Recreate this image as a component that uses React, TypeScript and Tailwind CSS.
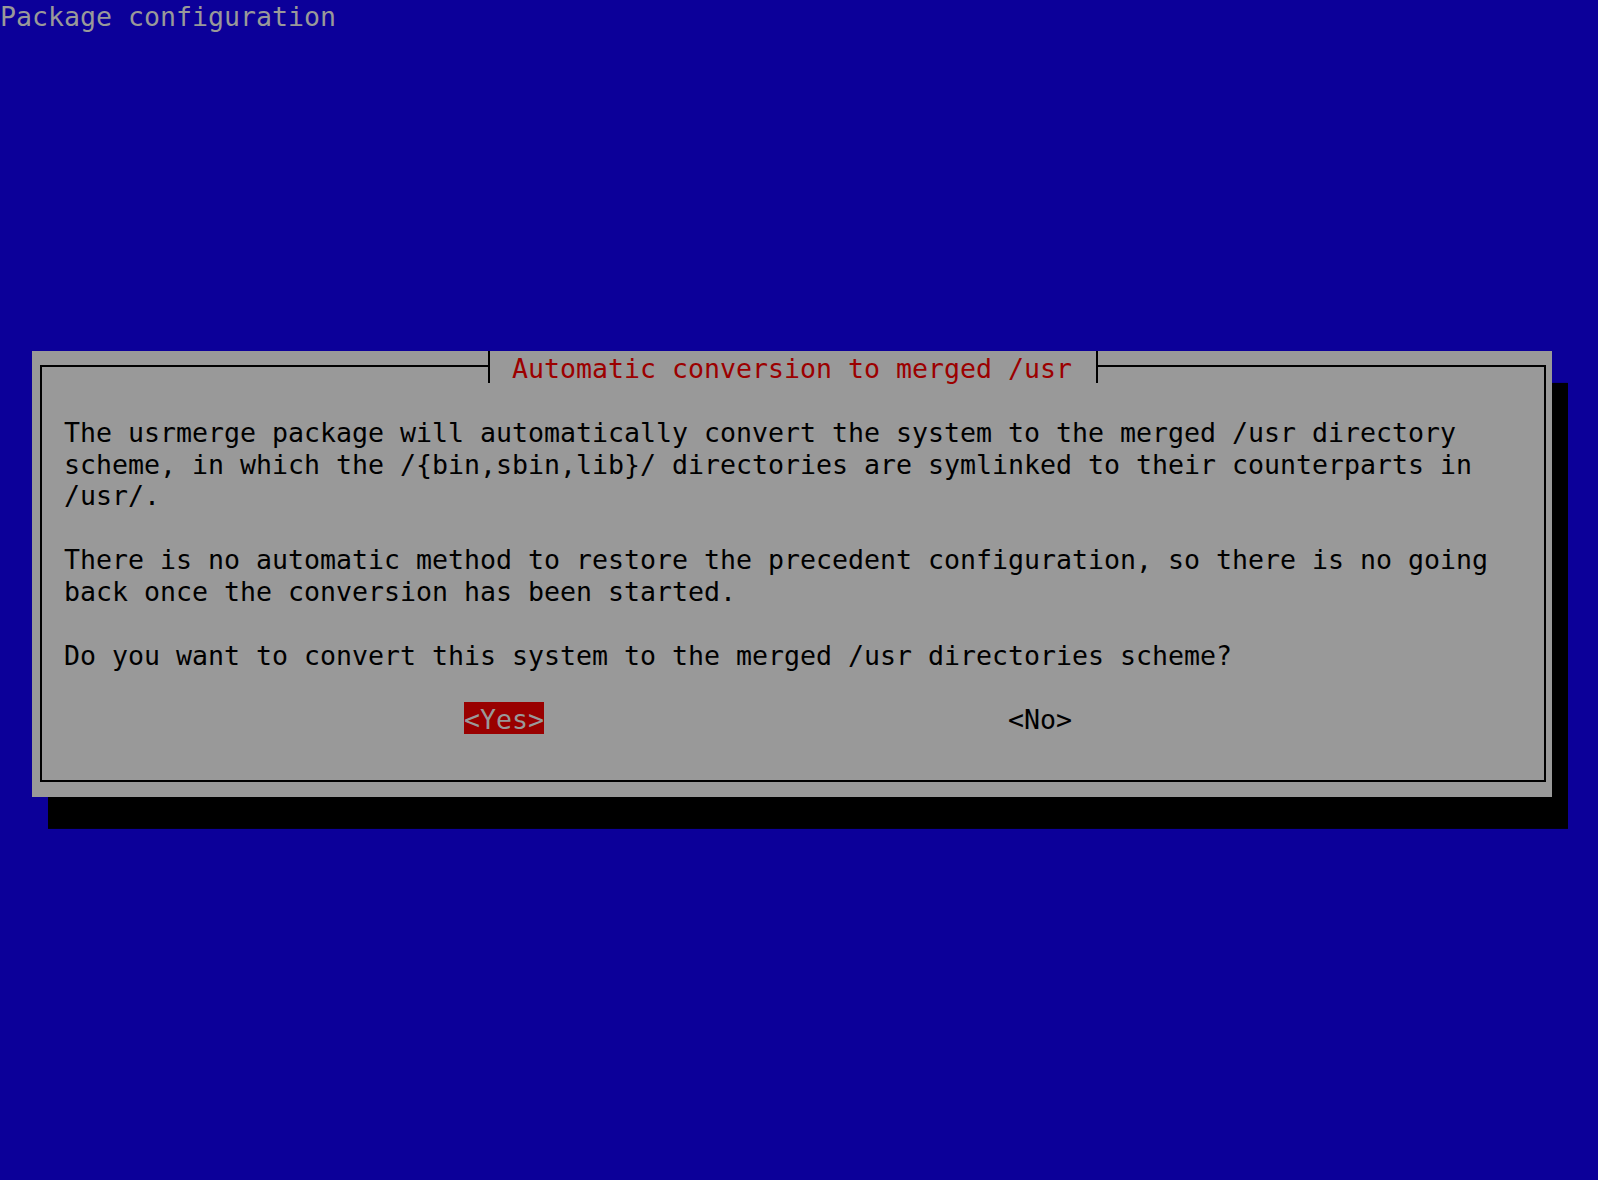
import React from "react";

// whiptail-style dialog on a 100x37 text grid (cell 16 x 31.9)
const body = [
  "The usrmerge package will automatically convert the system to the merged /usr directory",
  "scheme, in which the /{bin,sbin,lib}/ directories are symlinked to their counterparts in",
  "/usr/.",
  "",
  "There is no automatic method to restore the precedent configuration, so there is no going",
  "back once the conversion has been started.",
  "",
  "Do you want to convert this system to the merged /usr directories scheme?",
  "",
];

export default function App() {
  return (
    <div className="h-[1180px] w-full overflow-hidden bg-[#0c0099] font-['DejaVu_Sans_Mono',monospace] text-[26.58px] leading-[31.9px]">
      <div className="h-[31.9px] whitespace-pre pt-[1px] text-[#999999]">Package configuration</div>

      <div className="pt-[319px] pl-[32px]">
        <div className="flex h-[446.6px] w-[1520px] flex-col bg-[#999999] text-black shadow-[16px_31.9px_0_0_#000]">
          {/* title row with the top frame line */}
          <div className="flex h-[31.9px] shrink-0">
            <div className="ml-[8px] mt-[14px] w-[448px] border-l-2 border-t-2 border-black" />
            <div className="w-[2px] bg-black" />
            <div className="whitespace-pre pt-[2px] pl-[22px] pr-[24px] text-[#9c0000]">Automatic conversion to merged /usr</div>
            <div className="w-[2px] bg-black" />
            <div className="mr-[6px] mt-[14px] flex-1 border-r-2 border-t-2 border-black" />
          </div>

          <div className="ml-[8px] mr-[6px] mb-[15.9px] flex-1 border-x-2 border-b-2 border-black pt-[31.9px] pl-[22px]">
            {body.map((line, i) => (
              <div key={i} className="h-[31.9px] whitespace-pre pt-[2px]">
                {line}
              </div>
            ))}
            <div className="flex h-[31.9px] whitespace-pre">
              <span className="ml-[400px] bg-[#990000] pt-[2px] text-[#999999]">&lt;Yes&gt;</span>
              <span className="ml-[464px] pt-[2px]">&lt;No&gt;</span>
            </div>
          </div>
        </div>
      </div>
    </div>
  );
}
